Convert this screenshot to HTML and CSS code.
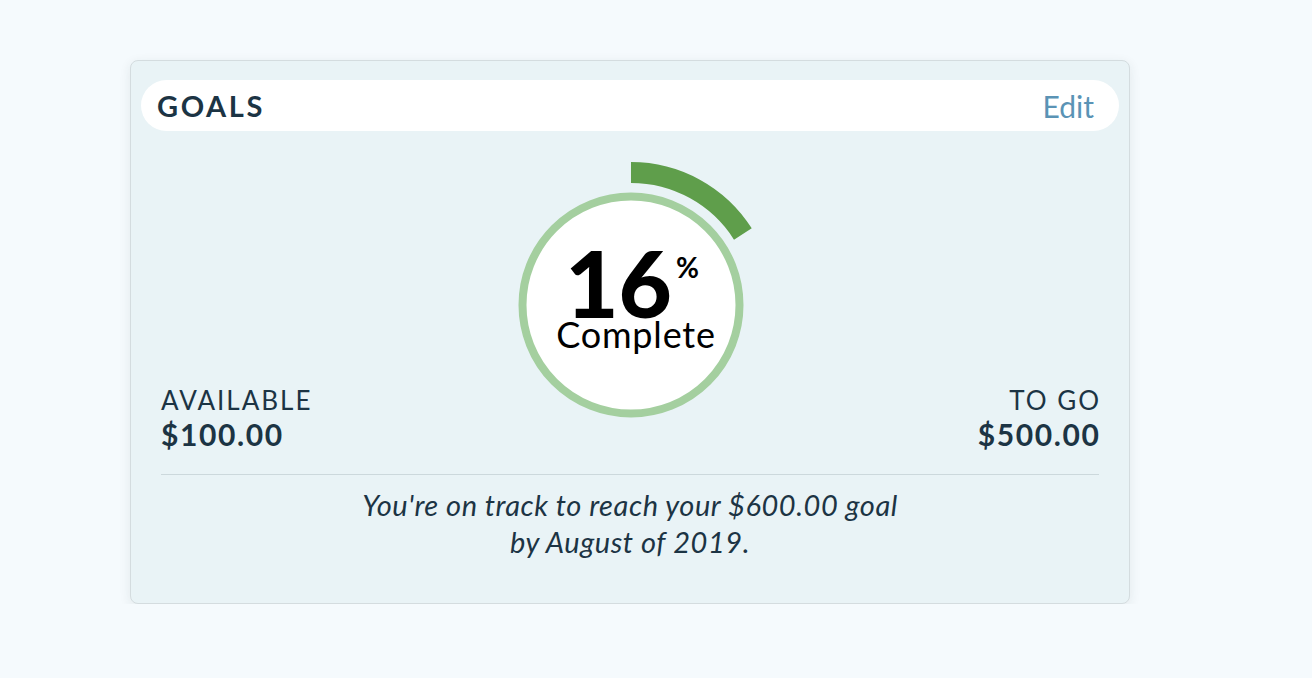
FILE: index.html
```html
<!DOCTYPE html>
<html lang="en">
<head>
<meta charset="utf-8">
<title>Goals</title>
<link rel="stylesheet" href="styles.css">
</head>
<body>
<main class="page">
  <section class="card">
    <header class="card-header">
      <h2 class="card-title">GOALS</h2>
      <a class="edit-link" href="#">Edit</a>
    </header>
    <div class="card-body">
      <div class="stats-row">
        <div class="stat stat-left">
          <div class="stat-label">AVAILABLE</div>
          <div class="stat-value">$100.00</div>
        </div>
        <div class="gauge">
          <svg class="gauge-svg" width="300" height="300" viewBox="0 0 300 300">
            <circle cx="151" cy="155" r="108.5" fill="#ffffff" stroke="#a4cf9f" stroke-width="8"/>
            <path d="M151 22.5 A132.5 132.5 0 0 1 262.87 84.0" fill="none" stroke="#5f9e4b" stroke-width="21"/>
            <text class="gauge-pct" x="152" y="168" text-anchor="middle">16<tspan class="gauge-sign" dx="4" dy="-40">%</tspan></text>
            <text class="gauge-sub" x="156" y="198" text-anchor="middle">Complete</text>
          </svg>
        </div>
        <div class="stat stat-right">
          <div class="stat-label">TO GO</div>
          <div class="stat-value">$500.00</div>
        </div>
      </div>
      <hr class="divider">
      <p class="summary">You're on track to reach your $600.00 goal<br>by August of 2019.</p>
    </div>
  </section>
</main>
</body>
</html>
```
FILE: styles.css
```css
html, body {
  margin: 0;
  padding: 0;
}
body {
  background: #f5fafd;
  font-family: "Lato", "Open Sans", sans-serif;
  color: #1c3444;
}
.page {
  padding: 60px 0 0 130px;
}
.card {
  width: 1000px;
  box-sizing: border-box;
  background: #e9f3f6;
  border: 1px solid #d4dcdf;
  border-radius: 8px;
  box-shadow: 0 3px 12px rgba(30, 50, 60, 0.09);
  padding: 19px 10px 43px;
}
.card-header {
  height: 51px;
  background: #ffffff;
  border-radius: 26px;
  display: flex;
  align-items: center;
  justify-content: space-between;
  padding: 0 25px 0 16px;
}
.card-title {
  margin: 0;
  font-size: 29px;
  font-weight: 700;
  letter-spacing: 2.6px;
  color: #1c3444;
  line-height: 1;
}
.edit-link {
  font-size: 30px;
  color: #5a93b5;
  text-decoration: none;
  line-height: 1;
}
.card-body {
  padding: 19px 20px 0;
}
.stats-row {
  display: grid;
  grid-template-columns: 1fr auto 1fr;
  align-items: end;
}
.stat-left {
  text-align: left;
}
.stat-right {
  text-align: right;
}
.stat-label {
  font-size: 26px;
  line-height: 30px;
  letter-spacing: 2px;
  color: #1c3444;
}
.stat-right .stat-label {
  margin-right: -2px;
}
.stat-value {
  margin-top: 3px;
  font-size: 30px;
  line-height: 32px;
  font-weight: 700;
  letter-spacing: 1.6px;
  color: #1c3444;
}
.stat-right .stat-value {
  margin-right: -1.6px;
}
.gauge {
  width: 300px;
  height: 300px;
}
.gauge-svg {
  display: block;
}
.gauge-pct {
  font-family: "Lato", sans-serif;
  font-size: 92px;
  font-weight: 900;
  fill: #000000;
}
.gauge-sign {
  font-size: 28px;
  font-weight: 700;
}
.gauge-sub {
  font-family: "Lato", sans-serif;
  font-size: 36px;
  letter-spacing: 0.8px;
  fill: #000000;
}
.divider {
  margin: 24px 0 0;
  border: 0;
  border-top: 1px solid #ccd8dc;
}
.summary {
  margin: 11px 0 0;
  text-align: center;
  font-style: italic;
  font-size: 29px;
  line-height: 37px;
  letter-spacing: 0.55px;
  color: #1c3444;
}
```
